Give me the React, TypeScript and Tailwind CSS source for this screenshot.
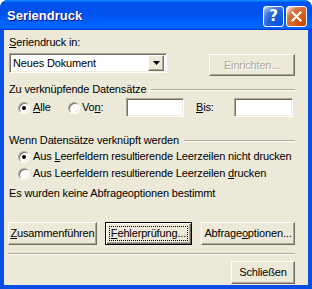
import type { ReactNode } from 'react'

// Windows XP "Seriendruck" Dialog (Luna-Rahmen, klassische Steuerelemente)

const raised =
  'border border-t-white border-l-white border-r-[#716f64] border-b-[#716f64] shadow-[inset_-1px_-1px_0_#aca899] bg-[#ece9d8]'
const sunken =
  'border border-t-[#aca899] border-l-[#aca899] border-r-white border-b-white shadow-[inset_1px_1px_0_#716f64,inset_-1px_-1px_0_#f1efe2] bg-white'

function Mn({ c }: { c: string }) {
  return <span className="underline decoration-1 underline-offset-[1px]">{c}</span>
}

function Radio({ checked }: { checked?: boolean }) {
  return (
    <span className="relative inline-block w-[12px] h-[12px] shrink-0 rounded-full border border-t-[#aca899] border-l-[#aca899] border-r-white border-b-white bg-white shadow-[inset_1px_1px_0_#716f64,inset_-1px_-1px_0_#f1efe2]">
      {checked && (
        <span className="absolute left-[3px] top-[3px] w-[4px] h-[4px] rounded-full bg-black" />
      )}
    </span>
  )
}

function GroupHeader({ children }: { children: ReactNode }) {
  return (
    <div className="flex items-center">
      <span className="ml-[1px] whitespace-nowrap">{children}</span>
      <div className="flex-1 ml-[5px] h-[2px] border-t border-t-[#aca899] border-b border-b-white" />
    </div>
  )
}

function Button({ children, w, focused }: { children: ReactNode; w: string; focused?: boolean }) {
  if (focused) {
    return (
      <div className={`${w} h-[23px] border border-black flex`}>
        <div className="flex-1 flex items-center justify-center bg-[#ece9d8] shadow-[inset_1px_1px_0_white,inset_-1px_-1px_0_#716f64,inset_-2px_-2px_0_#aca899] p-[3px]">
          <span className="flex-1 self-stretch flex items-center justify-center outline outline-1 outline-dotted outline-black -outline-offset-1">
            {children}
          </span>
        </div>
      </div>
    )
  }
  return <div className={`${w} h-[23px] ${raised} flex items-center justify-center`}>{children}</div>
}

export default function App() {
  return (
    <div className="w-[312px] h-[289px] flex flex-col rounded-t-[8px] overflow-hidden bg-[#0b4ee5] font-['Liberation_Sans',Arial,sans-serif] text-[11px] leading-[13px] tracking-[-0.15px] whitespace-nowrap text-black select-none">
      {/* Titelleiste */}
      <div className="h-[30px] shrink-0 flex items-center pl-[7px] pr-[5px] bg-[linear-gradient(180deg,#0997ff,#0053ee_8%,#0050ee_40%,#06f_88%,#06f_93%,#005bff_95%,#003dd7_96%,#003dd7)]">
        <span className="text-white font-bold text-[13px] tracking-normal [text-shadow:1px_1px_#0f1089]">
          Seriendruck
        </span>
        <div className="ml-auto flex gap-[2px] mt-[2px]">
          <div className="w-[21px] h-[21px] rounded-[3px] border border-white flex items-center justify-center bg-[radial-gradient(circle_at_90%_90%,#0054e9_0%,#2263d5_55%,#4479e4_70%,#a3bbec_90%,white_100%)]">
            <span className="text-white font-bold text-[15px] leading-none tracking-normal font-['DejaVu_Sans',sans-serif]">?</span>
          </div>
          <div className="w-[21px] h-[21px] rounded-[3px] border border-white flex items-center justify-center bg-[radial-gradient(circle_at_90%_90%,#cc4600_0%,#dc6527_55%,#cd7546_70%,#ffccb2_90%,white_100%)]">
            <svg width="11" height="11" viewBox="0 0 11 11">
              <path d="M1.5 1.5 L9.5 9.5 M9.5 1.5 L1.5 9.5" stroke="white" strokeWidth="2.2" strokeLinecap="square" />
            </svg>
          </div>
        </div>
      </div>

      {/* Rahmen + Inhalt */}
      <div className="flex-1 flex px-[4px] pb-[4px]">
        <div className="flex-1 flex flex-col bg-[#ece9d8] pl-[4px] pr-[13px]">
          <div className="mt-[6px] ml-[1px]">
            <Mn c="S" />eriendruck in:
          </div>

          <div className="mt-[4px] ml-[1px] flex items-start justify-between">
            <div className={`w-[158px] h-[20px] ${sunken} flex items-center p-[2px]`}>
              <span className="flex-1 pl-[1px]">Neues Dokument</span>
              <div className={`w-[16px] h-[16px] ${raised} flex items-center justify-center`}>
                <svg width="7" height="4" viewBox="0 0 7 4">
                  <path d="M0 0 H7 L3.5 4 Z" fill="black" />
                </svg>
              </div>
            </div>
            <div className={`w-[86px] h-[22px] mt-[1px] ${raised} flex items-center justify-center text-[#aca899] [text-shadow:1px_1px_white]`}>
              Einrichten...
            </div>
          </div>

          <div className="mt-[7px]">
            <GroupHeader>Zu verknüpfende Datensätze</GroupHeader>
          </div>

          <div className="mt-[2px] flex items-center">
            <div className="ml-[10px] w-[50px] flex items-center gap-[3px]">
              <Radio checked />
              <span>
                <Mn c="A" />lle
              </span>
            </div>
            <div className="w-[58px] flex items-center gap-[2px]">
              <Radio />
              <span>
                Vo<Mn c="n" />:
              </span>
            </div>
            <div className={`w-[58px] h-[19px] ${sunken}`} />
            <div className="ml-[12px] w-[38px]">
              <Mn c="B" />is:
            </div>
            <div className={`w-[59px] h-[19px] ${sunken}`} />
          </div>

          <div className="mt-[17px]">
            <GroupHeader>Wenn Datensätze verknüpft werden</GroupHeader>
          </div>

          <div className="mt-[3px] ml-[10px] flex items-center gap-[3px]">
            <Radio checked />
            <span>
              Aus <Mn c="L" />eerfeldern resultierende Leerzeilen nicht drucken
            </span>
          </div>
          <div className="mt-[4px] ml-[10px] flex items-center gap-[3px]">
            <Radio />
            <span>
              Aus Leerfeldern resultierende Leerzeilen <Mn c="d" />rucken
            </span>
          </div>

          <div className="mt-[7px] ml-[1px]">Es wurden keine Abfrageoptionen bestimmt</div>

          <div className="mt-[22px] flex">
            <Button w="w-[89px]">
              <span>
                <Mn c="Z" />usammenführen
              </span>
            </Button>
            <div className="ml-[8px]">
              <Button w="w-[87px]" focused>
                <span>
                  <Mn c="F" />ehlerprüfung...
                </span>
              </Button>
            </div>
            <div className="ml-[9px]">
              <Button w="w-[94px]">
                <span>
                  Abfrage<Mn c="o" />ptionen...
                </span>
              </Button>
            </div>
          </div>

          <div className="mt-[8px] h-[2px] border-t border-t-[#aca899] border-b border-b-white" />

          <div className="mt-[6px] self-end">
            <Button w="w-[64px]">Schließen</Button>
          </div>
        </div>
      </div>
    </div>
  )
}
